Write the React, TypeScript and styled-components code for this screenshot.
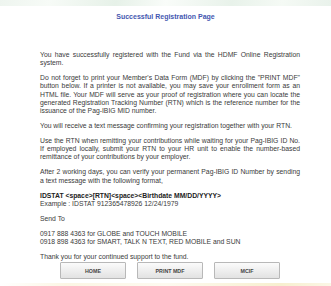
import styled, { createGlobalStyle } from 'styled-components';

const GlobalStyle = createGlobalStyle`
  html, body {
    margin: 0;
    padding: 0;
    background: #ffffff;
  }
  body {
    font-family: "Liberation Sans", Arial, sans-serif;
  }
`;

const Page = styled.div`
  width: 331px;
  height: 286px;
  overflow: hidden;
  display: flex;
  flex-direction: column;
  background: #ffffff;
`;

const TopBand = styled.div`
  height: 6px;
  flex-shrink: 0;
  background: linear-gradient(
    100deg,
    #eef5ef 0%,
    #f7fbf7 15%,
    #e6f1e8 35%,
    #f9fcf9 50%,
    #e8f2ea 70%,
    #f5faf5 85%,
    #e9f2eb 100%
  );
`;

const Title = styled.h1`
  margin: 7px 0 0;
  text-align: center;
  font-size: 7px;
  line-height: 8px;
  font-weight: bold;
  color: #4457b0;
`;

const Content = styled.div`
  flex: 1;
  padding: 30px 31px 0 40px;
  color: #3a3a3a;
  font-size: 6.8px;
  line-height: 8.2px;
`;

const Paragraph = styled.p`
  margin: 0 0 6.8px;
  text-align: justify;
`;

const Format = styled.p<{ $last?: boolean }>`
  margin: 0 0 ${({ $last }) => ($last ? '1px' : '6.8px')};
`;

const Strong = styled.span`
  font-weight: bold;
  color: #222;
`;

const ButtonRow = styled.div`
  display: flex;
  justify-content: center;
  gap: 11px;
`;

const Button = styled.button`
  width: 66px;
  height: 17px;
  padding: 0;
  border: 1px solid #b8b8b8;
  border-radius: 1px;
  background: linear-gradient(#fbfbfb, #e2e2e2);
  font-family: "Liberation Sans", Arial, sans-serif;
  font-size: 5.3px;
  font-weight: bold;
  color: #444;
`;

const BottomBand = styled.div`
  height: 3px;
  flex-shrink: 0;
  background: linear-gradient(
    90deg,
    #ffffff 0%,
    #fbf6e4 20%,
    #fdfaf0 50%,
    #f7efcf 85%,
    #fbf7e6 100%
  );
`;

const App = () => {
  return (
    <>
      <GlobalStyle />
      <Page>
        <TopBand />
        <Title>Successful Registration Page</Title>
        <Content>
          <Paragraph>
            You have successfully registered with the Fund via the HDMF Online Registration
            system.
          </Paragraph>
          <Paragraph>
            Do not forget to print your Member's Data Form (MDF) by clicking the "PRINT MDF"
            button below. If a printer is not available, you may save your enrollment form as an
            HTML file. Your MDF will serve as your proof of registration where you can locate the
            generated Registration Tracking Number (RTN) which is the reference number for the
            issuance of the Pag-IBIG MID number.
          </Paragraph>
          <Paragraph>
            You will receive a text message confirming your registration together with your RTN.
          </Paragraph>
          <Paragraph>
            Use the RTN when remitting your contributions while waiting for your Pag-IBIG ID No.
            If employed locally, submit your RTN to your HR unit to enable the number-based
            remittance of your contributions by your employer.
          </Paragraph>
          <Paragraph>
            After 2 working days, you can verify your permanent Pag-IBIG ID Number by sending
            a text message with the following format,
          </Paragraph>
          <Format>
            <Strong>IDSTAT &lt;space&gt;[RTN]&lt;space&gt;&lt;Birthdate MM/DD/YYYY&gt;</Strong>
            <br />
            Example : IDSTAT 912365478926 12/24/1979
          </Format>
          <Format>Send To</Format>
          <Format>
            0917 888 4363 for GLOBE and TOUCH MOBILE
            <br />
            0918 898 4363 for SMART, TALK N TEXT, RED MOBILE and SUN
          </Format>
          <Format $last>Thank you for your continued support to the fund.</Format>
          <ButtonRow>
            <Button type="button">HOME</Button>
            <Button type="button">PRINT MDF</Button>
            <Button type="button">MCIF</Button>
          </ButtonRow>
        </Content>
        <BottomBand />
      </Page>
    </>
  );
};

export default App;
